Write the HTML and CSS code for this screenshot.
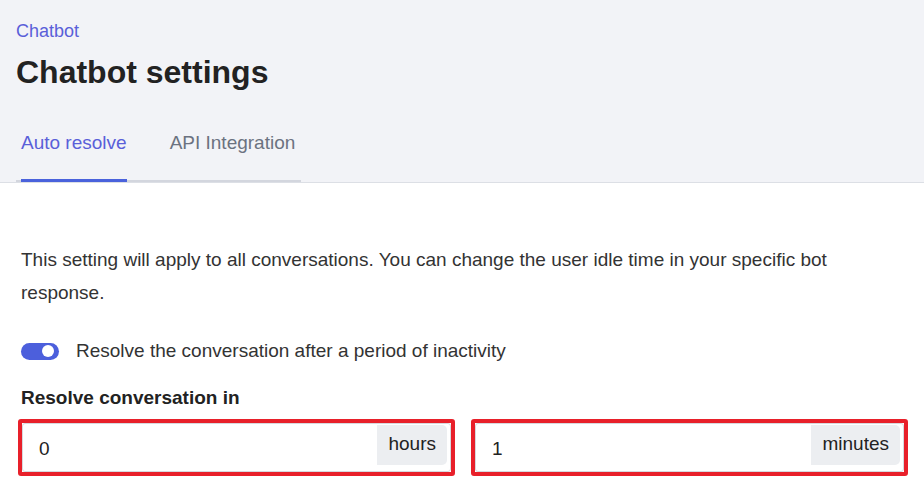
FILE: index.html
```html
<!DOCTYPE html>
<html lang="en">
<head>
  <meta charset="UTF-8">
  <meta name="viewport" content="width=device-width, initial-scale=1.0">
  <title>Chatbot settings</title>
  <link rel="stylesheet" href="styles.css">
</head>
<body>
  <div class="header">
    <div class="crumb">Chatbot</div>
    <h1>Chatbot settings</h1>
    <div class="tabs">
      <div class="tab active">Auto resolve</div>
      <div class="tab">API Integration</div>
    </div>
  </div>

  <div class="content">
    <p class="intro">This setting will apply to all conversations. You can change the user idle time in your specific bot response.</p>

    <div class="switch-row">
      <span class="switch"><span class="knob"></span></span>
      <span>Resolve the conversation after a period of inactivity</span>
    </div>

    <div class="field-label">Resolve conversation in</div>
    <div class="inputs">
      <div class="highlight">
        <div class="input-group">
          <span class="value">0</span>
          <span class="addon">hours</span>
        </div>
      </div>
      <div class="highlight">
        <div class="input-group">
          <span class="value">1</span>
          <span class="addon">minutes</span>
        </div>
      </div>
    </div>
  </div>
</body>
</html>
```

FILE: styles.css
```css
body {
  margin: 0;
  font-family: 'Liberation Sans', Arial, sans-serif;
  color: #222;
  background: #fff;
}
.header {
  background: #f2f3f7;
  border-bottom: 1px solid #dcdfe5;
  padding: 21px 16px 0;
}
.crumb {
  color: #5a5fd9;
  font-size: 18px;
  line-height: 21px;
}
h1 {
  margin: 12px 0 0;
  font-size: 32px;
  line-height: 37px;
  color: #222;
}
.tabs {
  display: inline-flex;
  gap: 43px;
  margin-top: 41px;
  padding: 0 6px 0 5px;
  border-bottom: 2px solid #d3d6de;
}
.tab {
  font-size: 19px;
  line-height: 22px;
  padding-bottom: 25px;
  color: #6b7280;
  margin-bottom: -2px;
  border-bottom: 3px solid transparent;
}
.tab.active {
  color: #5a5fd9;
  border-bottom-color: #4a62dc;
}
.content {
  padding: 60px 16px 0 21px;
}
.intro {
  margin: 0;
  font-size: 19px;
  line-height: 33px;
  color: #333;
  max-width: 870px;
}
.switch-row {
  display: flex;
  align-items: center;
  gap: 17px;
  margin-top: 31px;
  font-size: 19px;
  color: #333;
}
.switch {
  width: 38px;
  height: 17px;
  border-radius: 9px;
  background: #4c5fdc;
  display: flex;
  align-items: center;
  justify-content: flex-end;
  padding-right: 5px;
  box-sizing: border-box;
}
.knob {
  width: 12px;
  height: 12px;
  border-radius: 50%;
  background: #fff;
}
.field-label {
  margin-top: 25px;
  font-size: 19px;
  font-weight: bold;
  color: #222;
}
.inputs {
  display: flex;
  gap: 16px;
  margin: 10px 0 0 -3px;
}
.highlight {
  flex: 1;
  border: 4px solid #e8202a;
  border-radius: 3px;
}
.input-group {
  display: flex;
  align-items: flex-start;
  justify-content: space-between;
  height: 46px;
  border: 1px solid #d6d9de;
  border-radius: 3px;
  background: #fff;
  padding: 1px 3px 0 16px;
  font-size: 19px;
  color: #222;
}
.value {
  align-self: center;
  padding-top: 2px;
}
.addon {
  background: #eceef1;
  border-radius: 0 5px 5px 0;
  height: 40px;
  line-height: 38px;
  padding: 0 11px;
  color: #222;
}
```
